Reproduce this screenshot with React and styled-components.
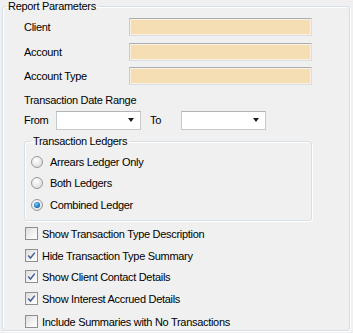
import styled, { createGlobalStyle } from "styled-components";

const GlobalStyle = createGlobalStyle`
  html, body {
    margin: 0;
    padding: 0;
    background: #f0f0f0;
  }
  body {
    font-family: "Liberation Sans", Arial, sans-serif;
    font-size: 11px;
    letter-spacing: -0.3px;
    color: #000;
  }
`;

const Page = styled.div`
  width: 353px;
  height: 333px;
  background: #f0f0f0;
  padding: 0 3px 0 2px;
  box-sizing: border-box;
`;

const Group = styled.fieldset`
  margin: 0;
  padding: ${(p) => p.$padding || "0"};
  border: 1px solid #d5dfe5;
  border-radius: 3px;
  box-shadow: inset 1px 1px 0 #fff, 1px 1px 0 #fff;
  box-sizing: border-box;
  height: ${(p) => p.$height || "auto"};
  min-width: 0;
`;

const Legend = styled.legend`
  padding: 0 2px;
  margin-left: ${(p) => p.$offset || "0"};
  line-height: 13px;
  font-size: 11px;
`;

const FieldRow = styled.div`
  display: flex;
  align-items: center;
  height: 18px;
  margin-bottom: ${(p) => p.$gap || "6px"};
`;

const Label = styled.span`
  width: ${(p) => p.$width || "auto"};
  margin-left: ${(p) => p.$ml || "0"};
  flex: none;
  white-space: nowrap;
`;

const TextBox = styled.div`
  width: 183px;
  height: 18px;
  box-sizing: border-box;
  background: #f5deb3;
  border: 1px solid #dadde2;
  border-top-color: #abadb3;
  border-left-color: #c6c9cf;
  box-shadow: inset 0 0 0 1px #fbf1e0;
`;

const SectionLabel = styled.div`
  line-height: 13px;
  margin: 9px 0 4px;
`;

const Combo = styled.div`
  width: 85px;
  height: 19px;
  box-sizing: border-box;
  background: #fff;
  border: 1px solid #c5c8cd;
  border-top-color: #b0b3b8;
  display: flex;
  align-items: center;
  justify-content: flex-end;
  padding-right: 6px;
`;

const Arrow = styled.span`
  width: 0;
  height: 0;
  border-left: 3.5px solid transparent;
  border-right: 3.5px solid transparent;
  border-top: 4px solid #1c1c1c;
`;

const Ledgers = styled.div`
  margin: 6px 0 0 0;
  width: 288px;
`;

const OptionRow = styled.label`
  display: flex;
  align-items: center;
  height: 13px;
  margin-bottom: ${(p) => p.$gap || "8px"};
  white-space: nowrap;
`;

const Radio = styled.span`
  width: 12px;
  height: 12px;
  border-radius: 50%;
  box-sizing: border-box;
  border: 1px solid #9a9a9a;
  background: radial-gradient(circle at 40% 35%, #ffffff 0%, #e6e6e6 60%, #d0d0d0 100%);
  margin-right: 7px;
  flex: none;
  display: flex;
  align-items: center;
  justify-content: center;
  &::after {
    content: "";
    width: 6px;
    height: 6px;
    border-radius: 50%;
    background: ${(p) =>
      p.$checked
        ? "radial-gradient(circle at 40% 35%, #7fd0ff 0%, #1a7cc4 55%, #0b3f78 100%)"
        : "transparent"};
  }
`;

const Checks = styled.div`
  margin: 6px 0 0 1px;
`;

const CheckBox = styled.span`
  width: 13px;
  height: 13px;
  box-sizing: border-box;
  border: 1px solid #8e8f8f;
  background: linear-gradient(135deg, #dcdcdc 0%, #f4f4f4 60%, #ffffff 100%);
  margin-right: 4px;
  flex: none;
  display: flex;
  align-items: center;
  justify-content: center;
`;

const Check = () => (
  <svg width="9" height="9" viewBox="0 0 9 9">
    <path d="M1.2 4.6 L3.5 7 L7.8 1.6" fill="none" stroke="#4a5f98" strokeWidth="1.5" />
  </svg>
);

const checks = [
  ["Show Transaction Type Description", false, "9px"],
  ["Hide Transaction Type Summary", true, "8px"],
  ["Show Client Contact Details", true, "9px"],
  ["Show Interest Accrued Details", true, "10px"],
  ["Include Summaries with No Transactions", false, "0"],
];

export default function App() {
  return (
    <>
      <GlobalStyle />
      <Page>
        <Group $height="331px" $padding="5px 0 0 21px">
          <Legend $offset="-18px">Report Parameters</Legend>
          <FieldRow $gap="7px">
            <Label $width="105px">Client</Label>
            <TextBox />
          </FieldRow>
          <FieldRow $gap="6px">
            <Label $width="105px">Account</Label>
            <TextBox />
          </FieldRow>
          <FieldRow>
            <Label $width="105px">Account Type</Label>
            <TextBox />
          </FieldRow>
          <SectionLabel>Transaction Date Range</SectionLabel>
          <FieldRow $gap="0">
            <Label $width="32px">From</Label>
            <Combo>
              <Arrow />
            </Combo>
            <Label $width="31px" $ml="9px">To</Label>
            <Combo>
              <Arrow />
            </Combo>
          </FieldRow>
          <Ledgers>
            <Group $padding="7px 0 0 6px" $height="86px">
              <Legend $offset="0">Transaction Ledgers</Legend>
              <OptionRow>
                <Radio />
                Arrears Ledger Only
              </OptionRow>
              <OptionRow $gap="9px">
                <Radio />
                Both Ledgers
              </OptionRow>
              <OptionRow $gap="0">
                <Radio $checked />
                Combined Ledger
              </OptionRow>
            </Group>
          </Ledgers>
          <Checks>
            {checks.map(([text, on, gap]) => (
              <OptionRow key={text} $gap={gap}>
                <CheckBox>{on && <Check />}</CheckBox>
                {text}
              </OptionRow>
            ))}
          </Checks>
        </Group>
      </Page>
    </>
  );
}
